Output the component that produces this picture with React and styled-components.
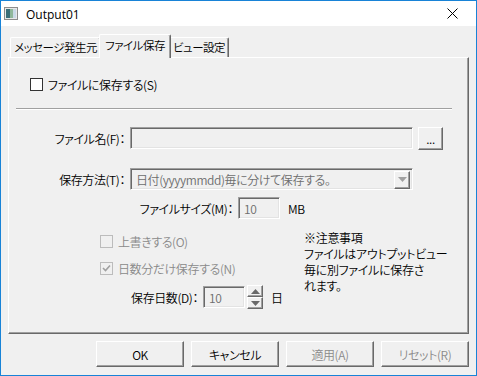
import styled, { createGlobalStyle } from 'styled-components';

const GlobalStyle = createGlobalStyle`
  html, body { margin: 0; padding: 0; background: #fff; }
  * { box-sizing: border-box; }
`;

const jp = `"Noto Sans CJK JP", "Noto Sans", sans-serif`;

const Window = styled.div`
  width: 477px;
  height: 376px;
  border: 1px solid #1883d7;
  display: flex;
  flex-direction: column;
  font-family: ${jp};
  font-feature-settings: 'palt';
  font-size: 12px;
  font-weight: 350;
  letter-spacing: -0.4px;
  color: #000;
`;

const TitleBar = styled.div`
  height: 25px;
  background: #fff;
  display: flex;
  align-items: center;
  padding-left: 3px;
`;

const Title = styled.span`
  font-family: 'Open Sans', 'Noto Sans', sans-serif;
  font-size: 12px;
  font-weight: 400;
  letter-spacing: 0;
  margin-left: 8px;
  margin-top: 1px;
  flex: 1;
`;

const CloseBox = styled.div`
  width: 46px;
  height: 25px;
  display: flex;
  align-items: center;
  justify-content: center;
  margin-right: 1px;
`;

const Body = styled.div`
  flex: 1;
  background: #f0f0f0;
  padding: 8px 7px 0 7px;
  display: flex;
  flex-direction: column;
`;

const TabRow = styled.div`
  height: 23px;
  display: flex;
  align-items: flex-end;
  padding-left: 2px;
  position: relative;
  z-index: 1;
`;

const Tab = styled.div`
  width: ${(p) => p.$w}px;
  height: ${(p) => (p.$active ? 24 : 20)}px;
  margin: 0 ${(p) => (p.$active ? -2 : 0)}px ${(p) => (p.$active ? -1 : 0)}px;
  padding-top: ${(p) => (p.$active ? 2 : 1)}px;
  background: #f0f0f0;
  border-top: 1px solid #fff;
  border-left: 1px solid #fff;
  border-right: 1px solid #696969;
  box-shadow: inset -1px 0 #a0a0a0;
  border-radius: 2px 2px 0 0;
  position: relative;
  z-index: ${(p) => (p.$active ? 2 : 1)};
  white-space: nowrap;
  text-align: center;
  font-size: 11.5px;
  letter-spacing: -0.5px;
  line-height: 17px;
`;

const Panel = styled.div`
  width: 461px;
  height: 277px;
  border-top: 1px solid #fff;
  border-left: 1px solid #fff;
  border-right: 1px solid #696969;
  border-bottom: 1px solid #696969;
  box-shadow: inset -1px -1px #a0a0a0;
  display: flex;
  flex-direction: column;
`;

const CheckRow = styled.label`
  display: flex;
  align-items: center;
  height: 16px;
  gap: 5px;
  margin-top: ${(p) => p.$top}px;
  margin-left: ${(p) => p.$left}px;
  color: ${(p) => (p.$disabled ? '#8a8a8a' : '#000')};
`;

const Box = styled.span`
  width: 13px;
  height: 13px;
  border: 1px solid ${(p) => (p.$disabled ? '#bcbcbc' : '#333')};
  background: ${(p) => (p.$disabled ? '#f0f0f0' : '#fff')};
  display: flex;
  align-items: center;
  justify-content: center;
`;

const Separator = styled.div`
  margin: 16px 0 0 7px;
  width: 436px;
  height: 2px;
  border-top: 1px solid #a0a0a0;
  border-bottom: 1px solid #fff;
`;

const FieldRow = styled.div`
  display: flex;
  align-items: center;
  gap: 5px;
  margin-top: ${(p) => p.$top}px;
  height: 22px;
`;

const Label = styled.span`
  width: ${(p) => p.$w}px;
  text-align: right;
  white-space: nowrap;
`;

const Sunken = styled.div`
  width: ${(p) => p.$w}px;
  height: 22px;
  border-top: 1px solid #a0a0a0;
  border-left: 1px solid #a0a0a0;
  border-right: 1px solid #fff;
  border-bottom: 1px solid #fff;
  box-shadow: inset 1px 1px #696969, inset -1px -1px #e3e3e3;
  background: #f0f0f0;
  color: #6d6d6d;
  padding: 1px 5px 0;
  display: flex;
  align-items: center;
  white-space: nowrap;
`;

const ComboArrow = styled.div`
  margin-left: auto;
  margin-right: -3px;
  width: 16px;
  height: 18px;
  border-top: 1px solid #fff;
  border-left: 1px solid #fff;
  border-right: 1px solid #696969;
  border-bottom: 1px solid #696969;
  box-shadow: inset -1px -1px #a0a0a0;
  display: flex;
  align-items: center;
  justify-content: center;
`;

const Raised = styled.button`
  width: ${(p) => p.$w}px;
  height: ${(p) => p.$h}px;
  padding: 0;
  background: #f0f0f0;
  border-top: 1px solid #fff;
  border-left: 1px solid #fff;
  border-right: 1px solid #696969;
  border-bottom: 1px solid #696969;
  box-shadow: inset -1px -1px #a0a0a0;
  font-family: ${jp};
  font-feature-settings: 'palt';
  font-size: 12px;
  font-weight: 350;
  letter-spacing: -0.4px;
  color: ${(p) => (p.$disabled ? '#8a8a8a' : '#000')};
  display: flex;
  align-items: center;
  justify-content: center;
`;

const Unit = styled.span`
  margin-left: 3px;
`;

const Lower = styled.div`
  display: flex;
`;

const LeftCol = styled.div`
  width: 295px;
  display: flex;
  flex-direction: column;
`;

const Spin = styled.div`
  display: flex;
  flex-direction: column;
  margin-left: -3px;
`;

const Note = styled.div`
  margin-top: 11px;
  line-height: 16px;
  letter-spacing: -0.3px;
`;

const ButtonRow = styled.div`
  display: flex;
  justify-content: flex-end;
  gap: 7px;
  margin-top: 7px;
`;

const Tri = ({ up, color = '#696969' }) => (
  <svg width="9" height="5" viewBox="0 0 9 5">
    <polygon points={up ? '0,5 9,5 4.5,0' : '0,0 9,0 4.5,5'} fill={color} />
  </svg>
);

const Check = () => (
  <svg width="9" height="9" viewBox="0 0 9 9">
    <path d="M1 4 L3.5 6.5 L8 1.5" stroke="#a0a0a0" strokeWidth="1.6" fill="none" />
  </svg>
);

const Checkbox = ({ top, left, disabled, checked, children }) => (
  <CheckRow $top={top} $left={left} $disabled={disabled}>
    <Box $disabled={disabled}>{checked && <Check />}</Box>
    {children}
  </CheckRow>
);

const AppIcon = () => (
  <svg width="14" height="13" viewBox="0 0 14 13">
    <rect x="0.5" y="0.5" width="13" height="12" fill="#e8e8e8" stroke="#8c8c8c" />
    <rect x="2" y="2" width="4" height="9" fill="#3a6e78" />
    <rect x="6" y="2" width="3" height="9" fill="#8fb79a" />
    <rect x="9" y="2" width="3" height="9" fill="#c9d9e6" />
  </svg>
);

const App = () => (
  <>
    <GlobalStyle />
    <Window>
      <TitleBar>
        <AppIcon />
        <Title>Output01</Title>
        <CloseBox>
          <svg width="11" height="11" viewBox="0 0 11 11">
            <path d="M0.5 0.5 L10.5 10.5 M10.5 0.5 L0.5 10.5" stroke="#000" strokeWidth="1" />
          </svg>
        </CloseBox>
      </TitleBar>
      <Body>
        <TabRow>
          <Tab $w={91}>メッセージ発生元</Tab>
          <Tab $w={72} $active>ファイル保存</Tab>
          <Tab $w={60}>ビュー設定</Tab>
        </TabRow>
        <Panel>
          <Checkbox top={18} left={21}>ファイルに保存する(S)</Checkbox>
          <Separator />
          <FieldRow $top={17}>
            <Label $w={116}>ファイル名(F)：</Label>
            <Sunken $w={283} />
            <Raised $w={25} $h={23}>...</Raised>
          </FieldRow>
          <FieldRow $top={19}>
            <Label $w={116}>保存方法(T)：</Label>
            <Sunken $w={283}>
              日付(yyyymmdd)毎に分けて保存する。
              <ComboArrow>
                <Tri color="#a0a0a0" />
              </ComboArrow>
            </Sunken>
          </FieldRow>
          <FieldRow $top={7}>
            <Label $w={224}>ファイルサイズ(M)：</Label>
            <Sunken $w={42}>10</Sunken>
            <Unit>MB</Unit>
          </FieldRow>
          <Lower>
            <LeftCol>
              <Checkbox top={14} left={91} disabled>上書きする(O)</Checkbox>
              <Checkbox top={11} left={91} disabled checked>日数分だけ保存する(N)</Checkbox>
              <FieldRow $top={10}>
                <Label $w={189}>保存日数(D)：</Label>
                <Sunken $w={42}>10</Sunken>
                <Spin>
                  <Raised $w={16} $h={12}><Tri up /></Raised>
                  <Raised $w={16} $h={12}><Tri /></Raised>
                </Spin>
                <Unit>日</Unit>
              </FieldRow>
            </LeftCol>
            <Note>
              ※注意事項
              <br />
              ファイルはアウトプットビュー
              <br />
              毎に別ファイルに保存さ
              <br />
              れます。
            </Note>
          </Lower>
        </Panel>
        <ButtonRow>
          <Raised $w={88} $h={26}>OK</Raised>
          <Raised $w={88} $h={26}>キャンセル</Raised>
          <Raised $w={88} $h={26} $disabled>適用(A)</Raised>
          <Raised $w={88} $h={26} $disabled>リセット(R)</Raised>
        </ButtonRow>
      </Body>
    </Window>
  </>
);

export default App;
